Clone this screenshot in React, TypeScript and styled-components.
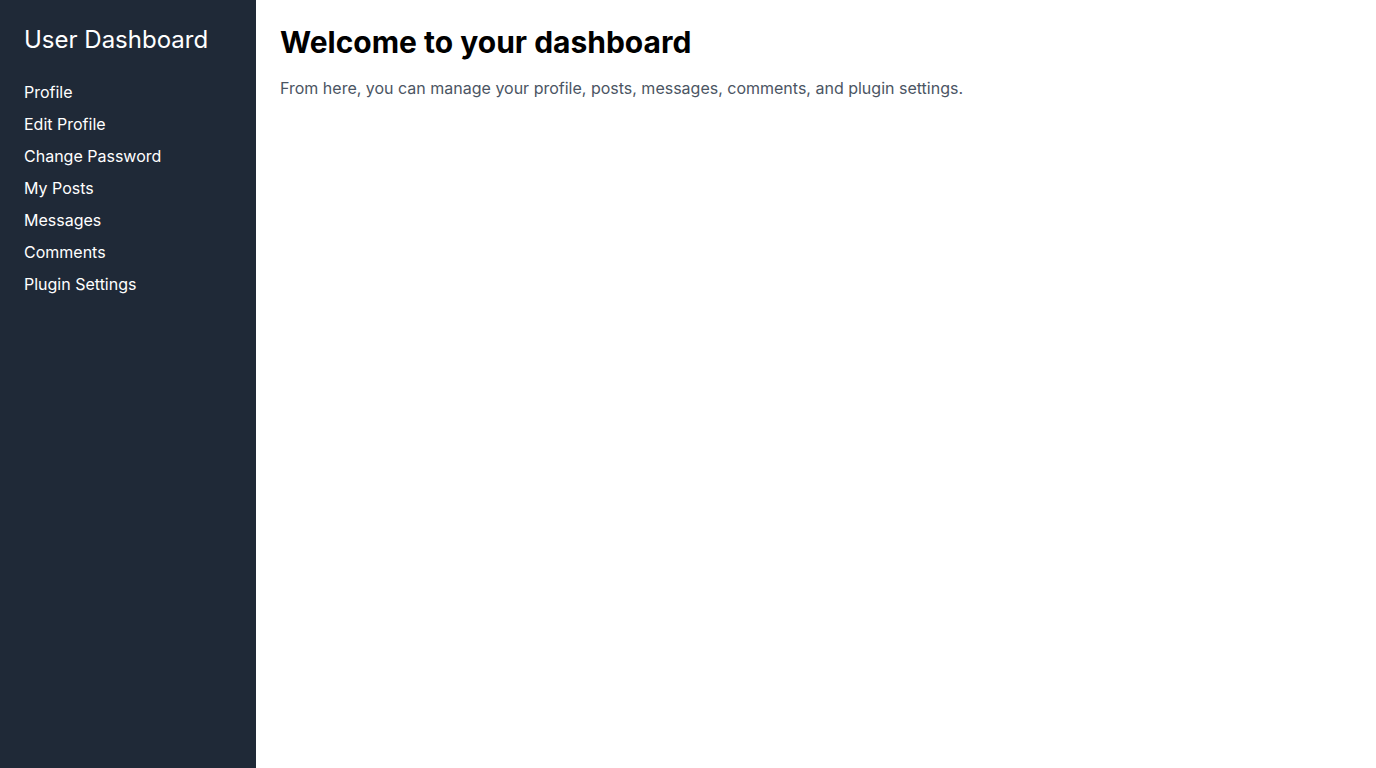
import React from 'react';
import styled, { createGlobalStyle } from 'styled-components';

const GlobalStyle = createGlobalStyle`
  html, body {
    margin: 0;
    padding: 0;
  }
  body {
    font-family: Inter, "Noto Sans", sans-serif;
    -webkit-font-smoothing: antialiased;
  }
  * { box-sizing: border-box; }
`;

const Layout = styled.div`
  display: flex;
  min-height: 100vh;
`;

const Sidebar = styled.aside`
  width: 256px;
  flex-shrink: 0;
  background: #1f2937;
  color: #ffffff;
  padding: 24px;
`;

const SidebarTitle = styled.h2`
  margin: 0 0 24px;
  font-size: 24px;
  line-height: 32px;
  font-weight: 400;
`;

const NavList = styled.ul`
  list-style: none;
  margin: 0;
  padding: 0;
  display: flex;
  flex-direction: column;
  gap: 8px;
`;

const NavLink = styled.a`
  display: block;
  color: #ffffff;
  text-decoration: none;
  font-size: 16px;
  line-height: 24px;
`;

const Main = styled.main`
  flex: 1;
  padding: 24px;
  background: #ffffff;
`;

const Heading = styled.h1`
  margin: 0 0 16px;
  font-size: 30px;
  line-height: 36px;
  font-weight: 700;
  color: #000000;
`;

const Intro = styled.p`
  margin: 0;
  font-size: 16px;
  line-height: 24px;
  color: #4b5563;
`;

const links = [
  'Profile',
  'Edit Profile',
  'Change Password',
  'My Posts',
  'Messages',
  'Comments',
  'Plugin Settings',
];

export default function App() {
  return (
    <>
      <GlobalStyle />
      <Layout>
        <Sidebar>
          <SidebarTitle>User Dashboard</SidebarTitle>
          <NavList>
            {links.map((l) => (
              <li key={l}>
                <NavLink href="#">{l}</NavLink>
              </li>
            ))}
          </NavList>
        </Sidebar>
        <Main>
          <Heading>Welcome to your dashboard</Heading>
          <Intro>
            From here, you can manage your profile, posts, messages, comments, and plugin settings.
          </Intro>
        </Main>
      </Layout>
    </>
  );
}
